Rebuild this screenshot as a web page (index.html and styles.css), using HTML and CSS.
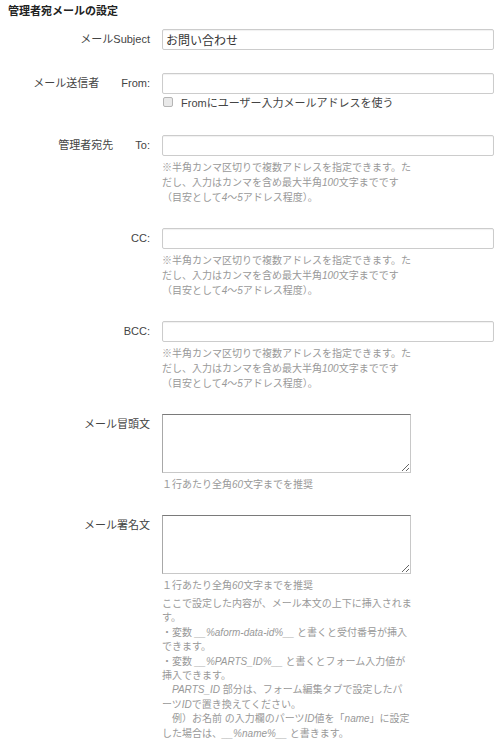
FILE: index.html
```html
<!DOCTYPE html>
<html lang="ja">
<head>
    <meta charset="UTF-8">
    <meta name="viewport" content="width=device-width, initial-scale=1.0">
    <title>管理者宛メールの設定</title>
    <link rel="stylesheet" href="styles.css">
</head>
<body>
    <div class="settings">
        <h2 class="settings-title">管理者宛メールの設定</h2>

        <div class="form-row">
            <label class="row-label" for="subject">メールSubject</label>
            <div class="row-field">
                <input type="text" id="subject" class="text-input" value="お問い合わせ">
            </div>
        </div>

        <div class="form-row">
            <label class="row-label" for="from">メール送信者<span class="sub-label">From:</span></label>
            <div class="row-field">
                <input type="text" id="from" class="text-input">
                <label class="check-line">
                    <input type="checkbox" class="check-box">
                    Fromにユーザー入力メールアドレスを使う
                </label>
            </div>
        </div>

        <div class="form-row">
            <label class="row-label" for="to">管理者宛先<span class="sub-label">To:</span></label>
            <div class="row-field">
                <input type="text" id="to" class="text-input">
                <p class="help">※半角カンマ区切りで複数アドレスを指定できます。た<br>だし、入力はカンマを含め最大半角<i>100</i>文字までです<br>（目安として<i>4</i>〜<i>5</i>アドレス程度）。</p>
            </div>
        </div>

        <div class="form-row">
            <label class="row-label" for="cc">CC:</label>
            <div class="row-field">
                <input type="text" id="cc" class="text-input">
                <p class="help">※半角カンマ区切りで複数アドレスを指定できます。た<br>だし、入力はカンマを含め最大半角<i>100</i>文字までです<br>（目安として<i>4</i>〜<i>5</i>アドレス程度）。</p>
            </div>
        </div>

        <div class="form-row">
            <label class="row-label" for="bcc">BCC:</label>
            <div class="row-field">
                <input type="text" id="bcc" class="text-input">
                <p class="help">※半角カンマ区切りで複数アドレスを指定できます。た<br>だし、入力はカンマを含め最大半角<i>100</i>文字までです<br>（目安として<i>4</i>〜<i>5</i>アドレス程度）。</p>
            </div>
        </div>

        <div class="form-row">
            <label class="row-label" for="header">メール冒頭文</label>
            <div class="row-field">
                <textarea id="header" class="text-area"></textarea>
                <p class="help">１行あたり全角<i>60</i>文字までを推奨</p>
            </div>
        </div>

        <div class="form-row">
            <label class="row-label" for="footer">メール署名文</label>
            <div class="row-field">
                <textarea id="footer" class="text-area"></textarea>
                <p class="help">１行あたり全角<i>60</i>文字までを推奨</p>
                <p class="help help-long">ここで設定した内容が、メール本文の上下に挿入されま<br>す。<br>・変数 <i>__%aform-data-id%__</i> と書くと受付番号が挿入<br>できます。<br>・変数 <i>__%PARTS_ID%__</i> と書くとフォーム入力値が<br>挿入できます。<br>　<i>PARTS_ID</i> 部分は、フォーム編集タブで設定したパ<br>ーツ<i>ID</i>で置き換えてください。<br>　例）お名前 の入力欄のパーツ<i>ID</i>値を「<i>name</i>」に設定<br>した場合は、<i>__%name%__</i> と書きます。</p>
            </div>
        </div>
    </div>
</body>
</html>
```

FILE: styles.css
```css
body {
    margin: 0;
    font-family: "Liberation Sans", "Noto Sans CJK JP", sans-serif;
    font-size: 11px;
    color: #333;
    background-color: #fff;
}

.settings {
    padding: 4px 5px 0 8px;
}

.settings-title {
    margin: 0 0 11px;
    font-size: 11px;
    line-height: 14px;
    font-weight: bold;
    color: #222;
}

.form-row {
    display: grid;
    grid-template-columns: 142px 332px;
    column-gap: 12px;
    margin-bottom: 23px;
}

.row-label {
    text-align: right;
    line-height: 21px;
    color: #444;
}

.sub-label {
    margin-left: 22px;
}

.text-input {
    display: block;
    box-sizing: border-box;
    width: 332px;
    height: 21px;
    margin: 0;
    padding: 0 3px;
    border: 1px solid #ccc;
    border-radius: 2px;
    box-shadow: inset 0 1px 1px rgba(0, 0, 0, 0.06);
    font-family: "Liberation Sans", "Noto Sans CJK JP", sans-serif;
    font-size: 12px;
    color: #333;
}

.text-area {
    display: block;
    box-sizing: border-box;
    width: 249px;
    height: 59px;
    margin: 0;
    padding: 2px 3px;
    border: 1px solid #c8c8c8;
    border-top-color: #7a7a7a;
    border-left-color: #a8a8a8;
    font-family: "Liberation Sans", "Noto Sans CJK JP", sans-serif;
    font-size: 12px;
}

.check-line {
    display: flex;
    align-items: center;
    height: 16px;
    margin: 0 0 2px;
    color: #444;
}

.check-box {
    appearance: none;
    width: 10px;
    height: 10px;
    margin: 0 8px 0 1px;
    border: 1px solid #b5b5b5;
    border-radius: 2px;
    background-color: #e9e9e9;
}

.help {
    margin: 4px 0 0;
    font-size: 10px;
    line-height: 15px;
    color: #999;
}

.help i {
    font-family: "Liberation Sans", sans-serif;
}

.help-long {
    line-height: 14.4px;
}
```
